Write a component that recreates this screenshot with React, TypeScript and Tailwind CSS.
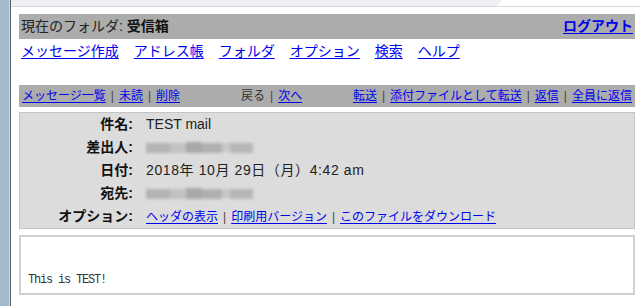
import React from "react"

const link = "text-[#0000ee] underline underline-offset-2"
const jp = "font-['Liberation_Sans','Noto_Sans_CJK_JP',sans-serif]"

const Sep = () => <span className="mx-[5px] text-[#444]">|</span>

// the address is pixelated in the screenshot, so draw a blurred smudge
const BlurredAddress = () => (
    <span className="flex h-[12px] w-[107px] items-center blur-[1.5px]">
        <span className="h-[10px] w-[24px] bg-[#b4b4b4]" />
        <span className="h-[10px] w-[16px] bg-[#c2c2c2]" />
        <span className="h-[11px] w-[16px] bg-[#a8a8a8]" />
        <span className="h-[10px] w-[20px] bg-[#b0b0b0]" />
        <span className="h-[9px] w-[8px] bg-[#c8c8c8]" />
        <span className="h-[10px] w-[23px] bg-[#b6b6b6]" />
    </span>
)

const HeaderRow: React.FunctionComponent<{ label: string; children: React.ReactNode }> = ({ label, children }) => (
    <div className="flex h-[23px] items-center">
        <div className="w-[113px] text-right font-bold text-[#111]">{label}:</div>
        <div className="pl-[13px] text-[#222]">{children}</div>
    </div>
)

export default function App() {
    const navItems = ["メッセージ作成", "アドレス帳", "フォルダ", "オプション", "検索", "ヘルプ"]

    return (
        <div className={`flex h-[306px] w-[640px] overflow-hidden bg-white ${jp}`}>
            <div className="w-[9px] bg-[#a3bacb]" />
            <div className="w-px bg-[#cfd8de]" />
            <div className="w-px bg-[#5c5c5c]" />
            <div className="flex flex-1 flex-col">
                <div className="flex h-[6px]">
                    <div className="w-[490px] rounded-br-[6px] bg-[#eef0f4]" />
                </div>
                <div className="h-px bg-[#d8d8d8]" />
                <div className="pl-[8px] pr-[5px] pt-[7px]">
                    {/* current folder */}
                    <div className="flex h-[25px] items-center justify-between bg-[#acacac] px-[2px] text-[14px] text-[#222]">
                        <div>
                            現在のフォルダ: <span className="font-bold text-[#111]">受信箱</span>
                        </div>
                        <a className={`${link} font-bold`}>ログアウト</a>
                    </div>

                    {/* main menu */}
                    <div className="flex h-[24px] items-center gap-[15px] px-[2px] text-[14px]">
                        {navItems.map((item) => (
                            <a key={item} className={link}>{item}</a>
                        ))}
                    </div>

                    {/* message toolbar */}
                    <div className="mt-[22px] flex h-[22px] items-center bg-[#acacac] px-[3px] text-[12px]">
                        <div className="w-[219px]">
                            <a className={link}>メッセージ一覧</a>
                            <Sep />
                            <a className={link}>未読</a>
                            <Sep />
                            <a className={link}>削除</a>
                        </div>
                        <div className="text-[#333]">
                            戻る
                            <Sep />
                            <a className={link}>次へ</a>
                        </div>
                        <div className="ml-auto">
                            <a className={link}>転送</a>
                            <Sep />
                            <a className={link}>添付ファイルとして転送</a>
                            <Sep />
                            <a className={link}>返信</a>
                            <Sep />
                            <a className={link}>全員に返信</a>
                        </div>
                    </div>

                    {/* headers */}
                    <div className="mt-[5px] border border-[#c4c4c4] bg-[#dcdcdc] text-[14px]">
                        <HeaderRow label="件名">TEST mail</HeaderRow>
                        <HeaderRow label="差出人"><BlurredAddress /></HeaderRow>
                        <HeaderRow label="日付"><span className="tracking-[0.6px]">2018年 10月 29日（月）4:42 am</span></HeaderRow>
                        <HeaderRow label="宛先"><BlurredAddress /></HeaderRow>
                        <HeaderRow label="オプション">
                            <span className="text-[12px]">
                                <a className={link}>ヘッダの表示</a>
                                <Sep />
                                <a className={link}>印刷用バージョン</a>
                                <Sep />
                                <a className={link}>このファイルをダウンロード</a>
                            </span>
                        </HeaderRow>
                    </div>

                    {/* body */}
                    <div className="mt-[6px] h-[60px] border-2 border-[#d0d0d0] bg-white pl-[7px] pt-[36px]">
                        <pre className="font-['Liberation_Mono',monospace] text-[12px] leading-[15px] tracking-[-1.2px] text-[#333]">This is TEST!</pre>
                    </div>
                </div>
            </div>
        </div>
    )
}
